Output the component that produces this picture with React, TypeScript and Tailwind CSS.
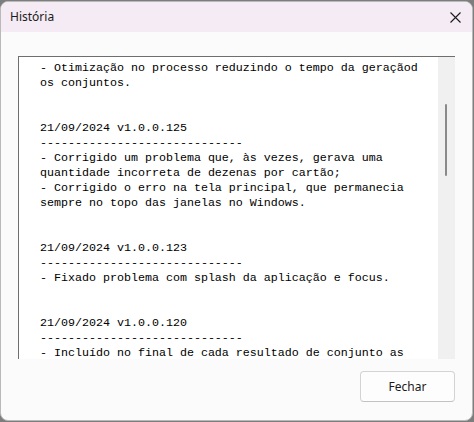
import React from "react";

const lines: string[] = [
  "- Otimização no processo reduzindo o tempo da geraçãod",
  "os conjuntos.",
  "",
  "",
  "21/09/2024 v1.0.0.125",
  "-----------------------------",
  "- Corrigido um problema que, às vezes, gerava uma",
  "quantidade incorreta de dezenas por cartão;",
  "- Corrigido o erro na tela principal, que permanecia",
  "sempre no topo das janelas no Windows.",
  "",
  "",
  "21/09/2024 v1.0.0.123",
  "-----------------------------",
  "- Fixado problema com splash da aplicação e focus.",
  "",
  "",
  "21/09/2024 v1.0.0.120",
  "-----------------------------",
  "- Incluído no final de cada resultado de conjunto as",
];

export default function App() {
  return (
    <div className="w-[474px] h-[422px] bg-[#7d7d7d] pt-px overflow-hidden">
      <div className="w-[473px] h-[420px] rounded-[8px] border border-[#b9b9b9] bg-[#fbfbfb] flex flex-col overflow-hidden">
        <div className="h-[30px] shrink-0 bg-[#f4ebf4] flex items-center justify-between pl-[9px] pr-[10px]">
          <span
            className="text-[12px] text-[#1b1b1b]"
            style={{ fontFamily: '"Noto Sans", "Open Sans", sans-serif' }}
          >
            História
          </span>
          <svg width="11" height="11" viewBox="0 0 11 11" className="mr-px">
            <path d="M0.5 0.5 L10.5 10.5 M10.5 0.5 L0.5 10.5" stroke="#1a1a1a" strokeWidth="1.1" fill="none" />
          </svg>
        </div>
        <div className="flex-1 flex flex-col pl-[17px] pr-[17px] pt-[24px]">
          <div className="h-[303px] flex border-t border-l border-[#6e6e6e] bg-white">
            <div
              className="flex-1 pl-[21px] pt-[4px] overflow-hidden text-black whitespace-pre"
              style={{ fontFamily: '"Liberation Mono", "Courier New", monospace', fontSize: "11.67px", lineHeight: "15px" }}
            >
              {lines.map((l, i) => (
                <div key={i} className="h-[15px]">{l}</div>
              ))}
            </div>
            <div className="w-[17px] shrink-0 bg-[#f0f0f0] relative">
              <div className="absolute left-[7px] top-[47px] w-[2px] h-[72px] rounded-full bg-[#8a8a8a]" />
            </div>
          </div>
          <div className="flex justify-end mt-[12px]">
            <button
              className="w-[95px] h-[31px] rounded-[4px] border border-[#d3d3d3] border-b-[#c2c2c2] bg-[#fdfdfd] text-[12px] text-[#1a1a1a]"
              style={{ fontFamily: '"Noto Sans", "Open Sans", sans-serif' }}
            >
              Fechar
            </button>
          </div>
        </div>
      </div>
    </div>
  );
}
